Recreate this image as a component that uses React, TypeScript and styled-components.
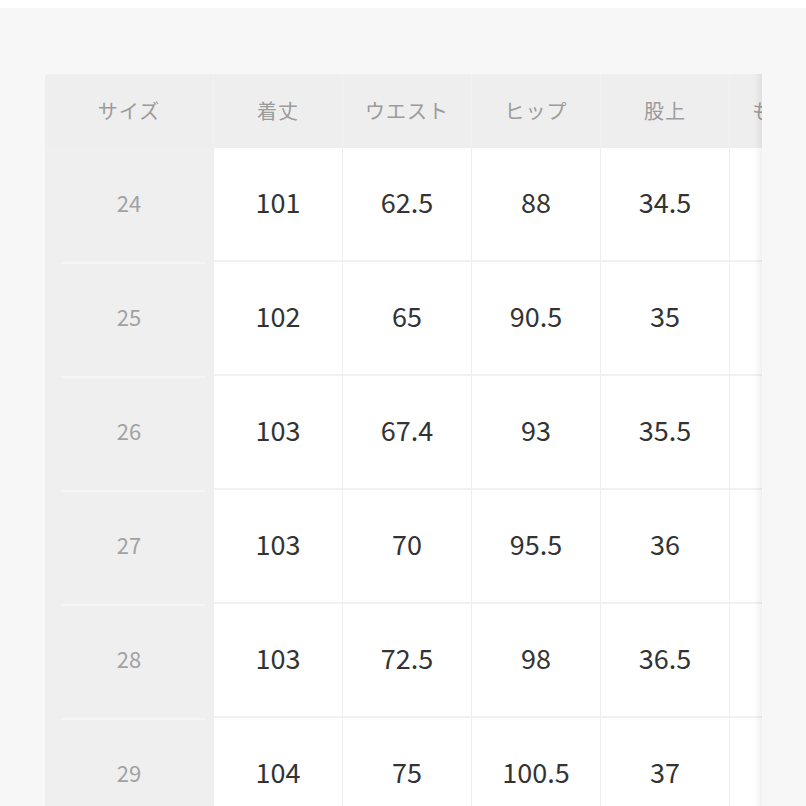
import React from 'react';
import styled, { createGlobalStyle } from 'styled-components';

const GlobalStyle = createGlobalStyle`
    html, body {
        margin: 0;
        padding: 0;
        background: #ffffff;
        overflow: hidden;
    }
    body {
        font-family: "Noto Sans CJK JP", "Noto Sans", sans-serif;
    }
`

const Page = styled.div`
    padding-top: 8px;
    height: 806px;
    box-sizing: border-box;
`

const Panel = styled.section`
    background-color: #f7f7f7;
    height: 100%;
    padding: 66px 0 0 45px;
    box-sizing: border-box;
`

const Scroller = styled.div`
    position: relative;
    width: 717px;
    overflow: hidden;
    border-radius: 4px 0 0 0;

    &::after {
        content: '';
        position: absolute;
        top: 0;
        right: 0;
        bottom: 0;
        width: 8px;
        background: linear-gradient(to right, rgba(0, 0, 0, 0), rgba(0, 0, 0, 0.06));
    }
`

const SizeTable = styled.div`
    display: grid;
    grid-template-columns: 168px repeat(6, 129px);
    grid-auto-rows: 114px;
    grid-template-rows: 74px;
    width: max-content;
`

const HeadCell = styled.div`
    display: flex;
    align-items: center;
    justify-content: center;
    padding-bottom: 2px;
    background-color: #eeeeee;
    color: #9b9b9b;
    font-size: 20px;
    letter-spacing: 1px;
    border-left: 1px solid #f1f1f1;
    box-sizing: border-box;

    &:first-child {
        border-left: none;
    }
`

const SizeCell = styled.div<{ first?: boolean }>`
    display: flex;
    align-items: center;
    justify-content: center;
    padding-bottom: 6px;
    box-sizing: border-box;
    background-color: #efefef;
    color: #a2a2a2;
    font-size: 22px;
    position: relative;

    &::before {
        content: '';
        display: ${props => props.first ? 'none' : 'block'};
        position: absolute;
        top: 0;
        left: 16px;
        right: 8px;
        height: 2px;
        background: #f5f5f5;
    }
`

const ValueCell = styled.div`
    display: flex;
    align-items: center;
    justify-content: center;
    padding-bottom: 6px;
    background-color: #ffffff;
    color: #333333;
    font-size: 27px;
    border-left: 1px solid #efefef;
    border-bottom: 2px solid #f1f1f1;
    box-sizing: border-box;
`

const headers = ['サイズ', '着丈', 'ウエスト', 'ヒップ', '股上', 'もも周り', '裾幅']

const rows = [
    { size: '24', values: ['101', '62.5', '88', '34.5', '56', '15'] },
    { size: '25', values: ['102', '65', '90.5', '35', '57.5', '15.5'] },
    { size: '26', values: ['103', '67.4', '93', '35.5', '59', '16'] },
    { size: '27', values: ['103', '70', '95.5', '36', '60.5', '16.5'] },
    { size: '28', values: ['103', '72.5', '98', '36.5', '62', '17'] },
    { size: '29', values: ['104', '75', '100.5', '37', '63.5', '17.5'] },
]

export default function App() {
    return (
        <>
            <GlobalStyle />
            <Page>
                <Panel>
                    <Scroller>
                        <SizeTable>
                            {headers.map(h => (
                                <HeadCell key={h}>{h}</HeadCell>
                            ))}
                            {rows.map((row, i) => (
                                <React.Fragment key={row.size}>
                                    <SizeCell first={i === 0}>{row.size}</SizeCell>
                                    {row.values.map((v, j) => (
                                        <ValueCell key={j}>{v}</ValueCell>
                                    ))}
                                </React.Fragment>
                            ))}
                        </SizeTable>
                    </Scroller>
                </Panel>
            </Page>
        </>
    )
}
